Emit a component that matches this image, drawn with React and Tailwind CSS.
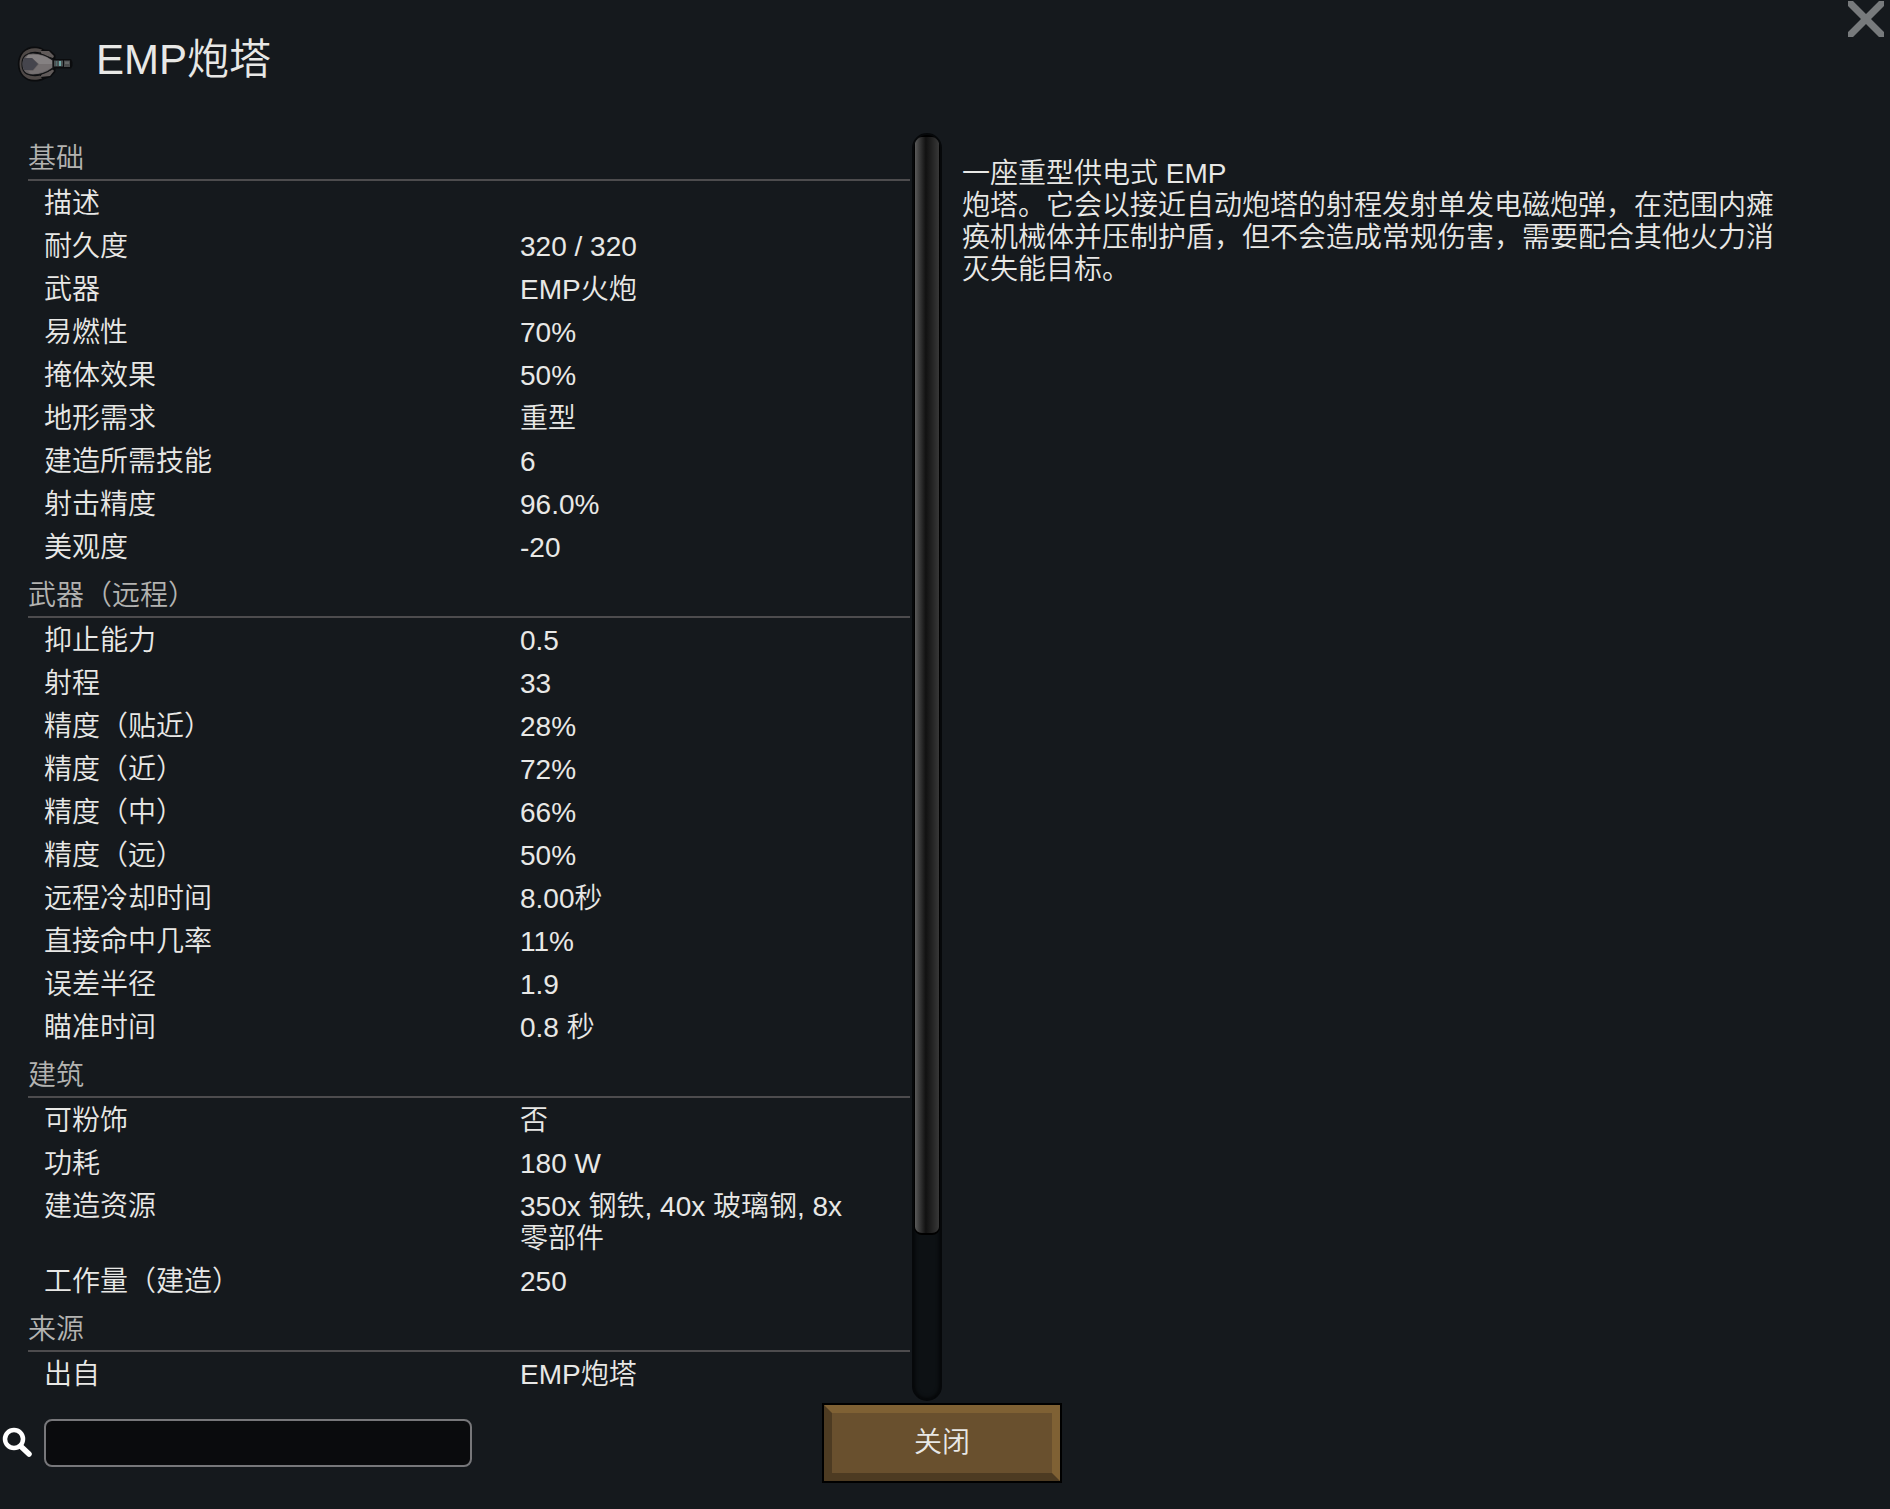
const sections = [
    {
        title: '基础',
        rows: [
            ['描述', ''],
            ['耐久度', '320 / 320'],
            ['武器', 'EMP火炮'],
            ['易燃性', '70%'],
            ['掩体效果', '50%'],
            ['地形需求', '重型'],
            ['建造所需技能', '6'],
            ['射击精度', '96.0%'],
            ['美观度', '-20'],
        ],
    },
    {
        title: '武器（远程）',
        rows: [
            ['抑止能力', '0.5'],
            ['射程', '33'],
            ['精度（贴近）', '28%'],
            ['精度（近）', '72%'],
            ['精度（中）', '66%'],
            ['精度（远）', '50%'],
            ['远程冷却时间', '8.00秒'],
            ['直接命中几率', '11%'],
            ['误差半径', '1.9'],
            ['瞄准时间', '0.8 秒'],
        ],
    },
    {
        title: '建筑',
        rows: [
            ['可粉饰', '否'],
            ['功耗', '180 W'],
            ['建造资源', '350x 钢铁, 40x 玻璃钢, 8x 零部件'],
            ['工作量（建造）', '250'],
        ],
    },
    {
        title: '来源',
        rows: [['出自', 'EMP炮塔']],
    },
];

const TurretIcon = () => (
    <svg width="56" height="36" viewBox="0 0 56 36" aria-hidden="true">
        <path d="M17 .5C22 .5 25 1.500 27 3.500L33 4L38.500 9L38.500 13H54L55.500 16V20L54 22.500H38.500V26L34 31L28 33C25 35 22 35.500 17 35.500C8 35.500 .8 28 .8 18C.8 8 8 .5 17 .5Z" fill="#0b0c0e" />
        <path d="M25 3.500C12-1 2.500 6 2.500 18C2.500 30 12 37 25 32.500L23 29.500C13 32 5.500 27 5.500 18C5.500 9 13 4 23 6.500Z" fill="#4f4947" />
        <path d="M23 5L32 5L37 10L36 12L25 9ZM23 31L33 30L37 25L36 23.500L25 28Z" fill="#615b5a" />
        <path d="M5 18C5 10 10 7 16 7C24 7 32 11 36 14V22C31 26 24 29 16 29C9 29 5 26 5 18Z" fill="#676263" stroke="#131416" strokeWidth="1.200" />
        <path d="M11 9C22 7 30 11 35 14.500V18H22L15 12H9Z" fill="#858182" />
        <path d="M22 18H35V21.500C29 25 22 28 14 28L11 25H16Z" fill="#757071" />
        <path d="M7 12H15L21 18L16 24H7C5 20 5 16 7 12Z" fill="#45454d" />
        <path d="M37 14.500H46V20.500H37Z" fill="#4b5153" />
        <path d="M42 15H44V20H42Z" fill="#6ea7a5" />
        <path d="M39 15H40V20H39Z" fill="#53706f" />
        <path d="M47 14.500H53V21H47Z" fill="#4b4d4e" />
        <path d="M48 15.500H52V18H48Z" fill="#656868" />
    </svg>
);

const SearchIcon = () => (
    <svg width="32" height="32" viewBox="0 0 32 32" fill="none" stroke="#fff" aria-hidden="true">
        <circle cx="14" cy="12" r="9" strokeWidth="4.500" />
        <path d="M21 19.500L29 27" strokeWidth="5.500" strokeLinecap="round" />
    </svg>
);

const CloseIcon = () => (
    <svg width="36" height="36" viewBox="0 0 36 36" fill="currentColor" aria-hidden="true">
        <path d="M0 0H5L18 13L31 0H36V5L23 18L36 31V36H31L18 23L5 36H0V31L13 18L0 5Z" />
    </svg>
);

const StatSection = ({ title, rows }) => (
    <section>
        <h2 className="border-b-2 border-[#4d4c4e] pt-3 pb-1 text-[#b3b3b1]">{title}</h2>
        <table className="w-full table-fixed text-left" aria-label={title}>
            <tbody>
                {rows.map(([label, value]) => (
                    <tr key={label} className="align-top">
                        <th scope="row" className="w-[492px] pt-[7px] pb-1 pl-4 font-[350]">{label}</th>
                        <td className="pt-[7px] pb-1 pr-10">{value}</td>
                    </tr>
                ))}
            </tbody>
        </table>
    </section>
);

const ScrollBar = () => (
    <div className="mt-[2px] w-[30px] shrink-0 overflow-hidden rounded-[15px] border-2 border-[#06080a] bg-[#0d1114] shadow-[inset_0_0_4px_#000]">
        <div className="h-[87%] rounded-lg border border-t-2 border-b-2 border-black bg-linear-to-r from-[#5a5a5a] via-[#111111] via-45% to-[#383838]" />
    </div>
);

export default function App() {
    return (
        <div
            lang="zh-CN"
            className="relative min-h-screen bg-[#15191d] font-['Liberation_Sans','Noto_Sans_CJK_SC',sans-serif] text-[28px] leading-8 font-[350] text-[#e8e8e6]"
        >
            <button type="button" aria-label="X" className="absolute top-px right-[6px] text-[#777a7c]">
                <CloseIcon />
            </button>

            <header className="flex h-[131px] gap-[23px] px-[17px] pt-9">
                <div className="pt-[10px]">
                    <TurretIcon />
                </div>
                <h1 className="text-[42px] leading-[48px]">EMP炮塔</h1>
            </header>

            <main className="grid grid-cols-2">
                <div className="flex gap-[2px] pr-[3px] pl-7">
                    <div className="grow pb-[6px]">
                        {sections.map((section) => (
                            <StatSection key={section.title} {...section} />
                        ))}
                    </div>
                    <ScrollBar />
                </div>
                <p className="pt-[27px] pr-[100px] pl-[17px]">
                    一座重型供电式 EMP
                    <br />
                    炮塔。它会以接近自动炮塔的射程发射单发电磁炮弹，在范围内瘫痪机械体并压制护盾，但不会造成常规伤害，需要配合其他火力消灭失能目标。
                </p>
            </main>

            <footer className="grid grid-cols-[1fr_auto_1fr] items-center pt-[2px] pr-[6px] pb-6">
                <label className="flex items-center gap-3">
                    <SearchIcon />
                    <input
                        type="text"
                        aria-label="搜索"
                        className="h-12 w-[428px] rounded-lg border-2 border-[#77777a] bg-[#0a0b0d] px-3 outline-none"
                    />
                </label>
                <button type="button" className="h-20 w-60 border-2 border-black">
                    <span className="flex h-full items-center justify-center border-8 border-t-[#7f6134] border-r-[#7f6134] border-b-[#4d3b22] border-l-[#4d3b22] bg-[#69502e]">
                        关闭
                    </span>
                </button>
            </footer>
        </div>
    );
}
